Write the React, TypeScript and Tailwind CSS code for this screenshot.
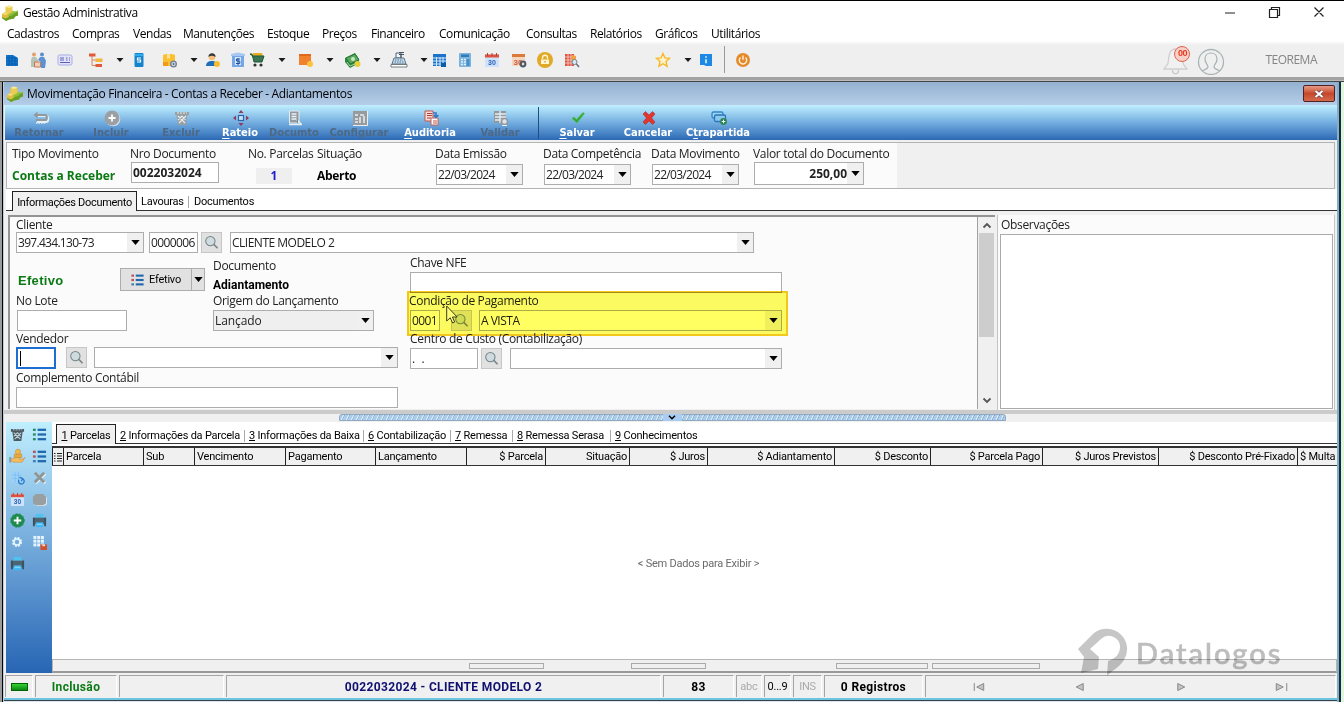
import React from "react";

type IconProps = { name: string; className?: string };

const Icon = ({ name, className = "w-4 h-4" }: IconProps) => (
  <svg viewBox="0 0 16 16" className={`shrink-0 overflow-visible ${className}`} fill="none">
    {glyphs[name]}
  </svg>
);

const listGlyph = (dots: string[], line: string) => (
  <>
    {[3, 8, 13].map((y, i) => (
      <g key={y}>
        <rect x="1" y={y - 1.2} width="3" height="2.4" fill={dots[i]} />
        <rect x="6" y={y - 1.2} width="9" height="2.4" fill={line} />
      </g>
    ))}
  </>
);

const calendar = (
  <>
    <rect x="1" y="2" width="14" height="13" rx="1" fill="#cfe2fb" />
    <path d="M1 5.500V2.500h14v3z" fill="#e0523f" />
    <path d="M3.500 1v3M8 1v3M12.500 1v3" stroke="#b9452f" />
    <text x="8" y="13" textAnchor="middle" fontSize="7" fontWeight="700" fontFamily="Liberation Sans, sans-serif" fill="#2a62b8">30</text>
  </>
);

const printer = (
  <>
    <path d="M4 1h8v4H4z" fill="#4fc3f0" />
    <path d="M1 5h14v7H1z" fill="#4d6573" />
    <path d="M1 5h2v9H1zM13 5h2v9h-2z" fill="#3d515e" />
    <path d="M4 10h8v5H4z" fill="#40b8f5" />
    <path d="M5 12h6" stroke="#9be1fb" />
  </>
);

const trash = (c: string, hi: string) => (
  <>
    <path d="M1 2h14v3h-1.500L12 15H4L2.500 5H1z" fill={c} />
    <path d="M4 6l7 7M8 6l3.500 4M12 6l-7 7M8 6l-4 4" stroke={hi} strokeWidth="1.100" />
    <path d="M3 3h10" stroke={hi} strokeDasharray="2 1" />
  </>
);

const glyphs: Record<string, React.ReactNode> = {
  caret: <path d="M4.500 6h7L8 10z" fill="#1a1a1a" />,
  app: (
    <>
      <path d="M0 9.500l4-2 3 1 3-3 3 1 3-1v5l-3 1-1 2-5 1-3 1.500-4-3z" fill="#8cc03a" />
      <path d="M0 11l4 2 4-2 3-1 2-2 3-1v3.500l-3 1-1 2-5 1-3 1.500-4-3z" fill="#6a9f27" />
      <path d="M3.500 2L6.500.500l4 1v5.500L7 9 3.500 7.500z" fill="#e9cc50" />
      <path d="M3.500 2L6.500.500l4 1L7.500 3z" fill="#f8ea9a" />
      <path d="M0 9l3-2 3.500 1.500V12l-3 1.500L0 12z" fill="#e0bd3c" />
      <path d="M0 9l3-2 3.500 1.500-3 1.500z" fill="#f4dd7a" />
    </>
  ),
  globe: (
    <>
      <path d="M2 3h7l5 3v8H2z" fill="#1376cf" />
      <path d="M2 6h11M2 9h12M2 12h12M5 3v11M8 3v11M11 5v9" stroke="#0959a4" strokeWidth=".8" />
    </>
  ),
  people: (
    <>
      <circle cx="4" cy="2.500" r="2" fill="#e0a071" />
      <circle cx="12" cy="2.500" r="2" fill="#5b8ed0" />
      <path d="M2 5h4l2 3v7H6v-4l-1 4H1V8z" fill="#b5c2b6" />
      <path d="M10 5h4l2 4-1 7h-4v-6L8 8z" fill="#5c92d4" />
      <path d="M4.500 10h6v5h-6z" fill="#f3cdb5" stroke="#bd724c" strokeWidth=".9" />
    </>
  ),
  card: (
    <>
      <rect x="1" y="3" width="14" height="10" rx="1.500" fill="#e3e4fb" stroke="#a9abe0" />
      <path d="M3 6h4M3 8h4M3 10.500h10M9 6h1.500M12 6h1M9 8h1.500M12 8h1" stroke="#5960b4" strokeWidth="1.200" />
    </>
  ),
  tree: (
    <>
      <path d="M4 4v9.500h4M4 8h4" stroke="#d78664" />
      <path d="M1 1.500h6.500v3H1zM7.500 12h6.500v3H7.500z" fill="#e05a37" />
      <path d="M7.500 6.500h7v3.500h-7z" fill="#f3b53a" />
    </>
  ),
  phone: (
    <>
      <rect x="3.500" y="1" width="9" height="14" rx="1" fill="#1484cf" />
      <path d="M4 2h8v2H4z" fill="#2dabf0" />
      <path d="M10 6H6.500v2h3v2H6" stroke="#fff" strokeWidth="1.200" />
    </>
  ),
  box: (
    <>
      <path d="M1 3l3-1h6l3 1v11H1z" fill="#fbc02d" />
      <path d="M5 2h3v5l-1.500-1L5 7z" fill="#fbe29a" />
      <path d="M1 10h5v4H1z" fill="#f29b1a" />
      <circle cx="11.500" cy="12" r="2.800" fill="#dce4ee" stroke="#72859b" strokeWidth="1.500" />
      <circle cx="11.500" cy="12" r="1" fill="#4b6789" />
    </>
  ),
  user: (
    <>
      <circle cx="7" cy="5" r="3.300" fill="#f6bf7a" />
      <path d="M3.500 5C3 0 11 0 10.500 5 8 4 6 3 3.500 5z" fill="#34343d" />
      <path d="M1 14c0-4 3-5 6-5s5 1 6 5z" fill="#1e6fb9" />
      <circle cx="12" cy="12" r="3" fill="#f8bf2d" />
    </>
  ),
  bag: (
    <>
      <path d="M2 4h12v11H2z" fill="#74a7e7" />
      <path d="M1 2l7-1.500L15 2v2H1z" fill="#a6c8f2" />
      <path d="M5 5h6v8H5z" fill="#d9e8fb" />
      <path d="M10 7H6.500v2h3.300v2.500H6M8 6v7" stroke="#1a4f9e" />
    </>
  ),
  cart: (
    <>
      <path d="M4 1h9l1 4H4z" fill="#e7ae24" />
      <path d="M1 2h2l2 8h8l2-6H4z" fill="#3a7653" stroke="#1f573c" />
      <circle cx="6" cy="13" r="1.600" fill="#333" />
      <circle cx="12" cy="13" r="1.600" fill="#333" />
    </>
  ),
  tile: (
    <>
      <path d="M1 2h12v11H1z" fill="#f0812d" />
      <path d="M1 2h12v2H1z" fill="#df6a1c" />
      <circle cx="12" cy="12" r="3" fill="#fbc23c" />
    </>
  ),
  money: (
    <>
      <path d="M0 6l10-5 4 6v4l-9 5-5-6z" fill="#2f8443" />
      <path d="M1 6l9-4 4 6-9 4z" fill="#59aa5e" stroke="#267739" />
      <circle cx="8" cy="7" r="2" fill="#c7e7c1" />
      <path d="M2 10l3 4 7-3" stroke="#a7d49c" />
      <circle cx="12.500" cy="12" r="3" fill="#e6cf3d" />
    </>
  ),
  register: (
    <>
      <path d="M5 1h5v5H5z" fill="#f1f6fb" stroke="#4f6478" />
      <path d="M3 6h10l2 6H1z" fill="#c5ddf1" stroke="#5b7287" />
      <path d="M4 8h8M3.500 10h9" stroke="#5b7287" strokeDasharray="1.500 1" />
      <path d="M0 12.500h16V15H0z" fill="#fff" stroke="#5b6266" strokeWidth=".8" />
      <path d="M8 .500h5M8 2.500h5M10 3v3" stroke="#4b545c" />
    </>
  ),
  gridcal: (
    <>
      <path d="M2 2h13v12H2z" fill="#1c73c9" />
      <path d="M2 6h13M2 9h13M2 12h13M5.500 5v9M9 5v9M12 5v9" stroke="#d2e8fa" />
      <path d="M10 11h5v4h-5z" fill="#0f5ca8" />
    </>
  ),
  calc: (
    <>
      <rect x="2" y="1" width="12" height="14" rx="1" fill="#7db3dc" />
      <path d="M4 2.500h8V5H4z" fill="#2d7dbb" />
      <path d="M4 7.500h5M4 10h5M4 12.500h5" stroke="#e2f1fb" strokeWidth="1.500" strokeDasharray="2 1" />
      <path d="M9.500 7h3v7h-3z" fill="#4290cb" />
    </>
  ),
  calendar,
  calset: (
    <>
      <path d="M1 2h13v12H1z" fill="#f4d6c1" />
      <path d="M1 2h13v3H1z" fill="#dc7b39" />
      <text x="7" y="13" textAnchor="middle" fontSize="8" fontWeight="700" fontFamily="Liberation Sans, sans-serif" fill="#d25b3d">30</text>
      <circle cx="12" cy="12" r="2.400" stroke="#4b5866" strokeWidth="2" />
    </>
  ),
  lock: (
    <>
      <circle cx="8" cy="8" r="8" fill="#e2a927" />
      <path d="M4 7.500h8V12H4z" fill="#fff5d2" />
      <path d="M5.500 7V5.500c0-3 5-3 5 0V7" stroke="#fff5d2" strokeWidth="1.300" />
      <path d="M8 9v1.500" stroke="#b97b0b" />
    </>
  ),
  report: (
    <>
      <path d="M1 2h9v12H1z" fill="#dc5546" />
      <path d="M1 5h9M1 8h9M1 11h9M4 2v12M7 2v12" stroke="#f9d4c4" strokeWidth=".8" />
      <path d="M8 3l4 1v6l-4 2z" fill="#f3a13c" />
      <circle cx="10.500" cy="10" r="2.500" fill="#d6e9f6" stroke="#75818c" />
      <path d="M12.500 12l2.500 3" stroke="#66707a" strokeWidth="1.500" />
    </>
  ),
  star: <path d="M8 1.500l1.900 4.400 4.600.4-3.500 3.200 1.100 4.700L8 11.700l-4.100 2.500L5 9.500 1.500 6.300l4.600-.4z" stroke="#f7b92a" strokeWidth="1.400" fill="#fff2cb" />,
  info: (
    <>
      <path d="M2 2h12v12H8l-2-1H2z" fill="#1e88e5" />
      <path d="M8 4.200v1.600M8 7.200v4" stroke="#d8eefd" strokeWidth="1.700" />
    </>
  ),
  power: (
    <>
      <circle cx="8" cy="8" r="7" fill="#e58a2b" />
      <path d="M5.500 5.500a3.700 3.700 0 1 0 5 0M8 3.500v4.200" stroke="#fff1da" strokeWidth="1.400" />
    </>
  ),
  back: (
    <>
      <path d="M6 6h8c3 0 3 6 0 6H5" stroke="#e6eff3" strokeWidth="2" />
      <path d="M5 5h8c2.500 0 2.500 5 0 5H4" stroke="#92989c" strokeWidth="2" />
      <path d="M1.500 5l4-3.500v7z" fill="#92989c" />
      <path d="M4 13h9" stroke="#e3edf2" strokeWidth="1.500" strokeDasharray="1.500 1" />
    </>
  ),
  plusgray: (
    <>
      <circle cx="9" cy="9" r="7.300" fill="#dce5ea" />
      <circle cx="8" cy="8" r="7.500" fill="#9aa0a4" />
      <path d="M8 4.500v7M4.500 8h7" stroke="#fff" strokeWidth="1.800" />
    </>
  ),
  trashgray: trash("#98a0a4", "#e8f0f4"),
  trash: trash("#4c5960", "#bcd3dc"),
  move: (
    <>
      <rect x="5.500" y="5.500" width="5" height="5" stroke="#2f64a8" strokeWidth="1.200" fill="#c9e4fa" />
      <path d="M8 0l2.500 3h-5zM8 16l2.500-3h-5zM0 8l3-2.500v5zM16 8l-3-2.500v5z" fill="#8f3a5c" />
    </>
  ),
  docgray: (
    <>
      <path d="M2.500 1h9.500v12H2.500z" fill="#929a9f" stroke="#e3edf2" />
      <path d="M4.500 4h5M4.500 6.500h5M4.500 9h5" stroke="#edf4f7" strokeWidth="1.300" />
      <path d="M10 10l4 4M2 14.500h13" stroke="#e7eef2" strokeWidth="1.700" />
      <path d="M10.500 9v4" stroke="#81898e" />
    </>
  ),
  config: (
    <>
      <path d="M1 1h14v14H1z" fill="#979b9e" />
      <path d="M15.500 1v14.500H1" stroke="#e9f0f4" />
      <path d="M3 5h3M3 9h3M8 13V7M12 13V6M8 5h4M3 12h3" stroke="#e9f0f4" strokeWidth="1.500" />
    </>
  ),
  audit: (
    <>
      <path d="M2 1h8v10H2z" fill="#f2dfdc" stroke="#c55345" />
      <path d="M4 3.500h5M4 5.500h5M4 8h4" stroke="#b63b33" />
      <path d="M8 8h7v7H8z" fill="#fff" stroke="#c06558" />
      <path d="M10 3h3v4m-2-2l2 2.500L15.500 5" stroke="#2e78c7" strokeWidth="1.500" />
      <path d="M10 11h4M10 13h4" stroke="#c55345" />
    </>
  ),
  validate: (
    <>
      <path d="M1 1h12v12H1z" fill="#8f999e" />
      <path d="M2 4h11M2 7h11M2 10h11M7 1v12" stroke="#e5edf1" strokeWidth="1.300" />
      <circle cx="11.500" cy="11.500" r="3" fill="#dce5ea" stroke="#93999c" strokeWidth="1.500" />
      <path d="M9 15.500h5" stroke="#eef4f6" />
    </>
  ),
  check: <path d="M2 8.500l2-1.500 2.500 2.500L13 2.500l1.500 1L7 13z" fill="#2fa83a" stroke="#55c34d" strokeWidth=".6" />,
  cross: <path d="M2 4l2.500-2.500L8 5l3.500-3.500L14 4l-3.500 4 3.500 4-2.500 2.500L8 11l-3.500 3.500L2 12l3.500-4z" fill="#e2352e" stroke="#a91f24" strokeWidth=".5" />,
  cards: (
    <>
      <rect x="1" y="2" width="11" height="6" rx="1.500" stroke="#3286c9" strokeWidth="1.300" fill="#9dd2f1" />
      <rect x="3.500" y="5" width="11" height="6.500" rx="1.500" stroke="#2575b8" strokeWidth="1.300" fill="#8cc8ee" />
      <circle cx="12.500" cy="11.500" r="3.400" fill="#298553" />
      <path d="M12.500 9.700v3.600M10.700 11.500h3.600" stroke="#fff" />
    </>
  ),
  search: (
    <>
      <circle cx="6.800" cy="6.500" r="5" stroke="#76868c" strokeWidth="1.100" fill="#cfdbde" />
      <path d="M10.500 10l4 4.200" stroke="#7b8588" strokeWidth="1.700" />
    </>
  ),
  listGreen: listGlyph(["#2a8b62", "#2a8b62", "#2a8b62"], "#1f68ad"),
  listRed: listGlyph(["#b84e5b", "#b84e5b", "#3b7db8"], "#1f68ad"),
  hand: (
    <>
      <path d="M1 10h3l3-1h4l-1 2h3l3-2-3 5H4l-3-1z" fill="#f5bd60" stroke="#c98936" strokeWidth=".6" />
      <path d="M4.500 5.500h8V9h-8z" fill="#e9aa3e" stroke="#c17f25" strokeWidth=".5" />
      <circle cx="8.500" cy="3" r="2.800" fill="#efb64c" stroke="#c17f25" strokeWidth=".5" />
      <path d="M0 8.500v6" stroke="#4f779a" />
    </>
  ),
  gridrefresh: (
    <>
      <path d="M2 2h10v11H2z" fill="#9fd2fa" />
      <path d="M2 5.500h10M2 9h10M5.500 2v11M9 2v11" stroke="#7fbff2" />
      <path d="M9.500 10.500a3 3 0 1 0 4-1.200M10 7.500l3.500 1.700L12 12" stroke="#2779cc" strokeWidth="1.400" />
    </>
  ),
  crossgray: (
    <>
      <path d="M4 4l10 10M14 4L4 14" stroke="#eef3f5" strokeWidth="3" />
      <path d="M3 3l10 10M13 3L3 13" stroke="#8f9698" strokeWidth="3.200" />
    </>
  ),
  printgray: (
    <>
      <path d="M5 3h8l3 3v7l-3 2H5l-3-2V6z" fill="#dfe6ea" />
      <path d="M4 2h8l3 3v7l-3 2H4l-3-2V5z" fill="#999fa1" />
    </>
  ),
  plusgreen: (
    <>
      <circle cx="8" cy="8" r="7.300" fill="#1e8b4e" />
      <circle cx="8" cy="8" r="7.300" stroke="#2a8f59" strokeDasharray="2 2" />
      <path d="M8 4v8M4 8h8" stroke="#fff" strokeWidth="2" />
    </>
  ),
  printer,
  gear: (
    <>
      <circle cx="8" cy="8" r="5.200" stroke="#e8f7ff" strokeWidth="3" strokeDasharray="2.500 1.600" />
      <circle cx="8" cy="8" r="4" stroke="#e4f4fd" strokeWidth="2.200" />
    </>
  ),
  gridsave: (
    <>
      {[1, 5, 9].map((y) => [1, 5, 9].map((x) => <rect key={`${x}-${y}`} x={x + 0.5} y={y} width="3.200" height="3.200" fill="#e5f4ff" />))}
      <path d="M9 10h7v6H9z" fill="#d2502e" />
      <path d="M11 10h3v2h-3z" fill="#f8d9ce" />
    </>
  ),
};

const SEGOE = "font-['Open_Sans',sans-serif] text-[12px] leading-4 whitespace-nowrap";
const LABEL = `${SEGOE} tracking-[-0.32px]`;
const SANS = "font-['Roboto',sans-serif] text-[11px] leading-4 whitespace-nowrap tracking-[-0.22px]";
const STATUS = "font-['Roboto',sans-serif] text-[12px] font-bold leading-4 whitespace-nowrap tracking-[0.35px]";
const BOLD = "font-['Open_Sans',sans-serif] font-bold text-[12px] leading-4 whitespace-nowrap";

const menus: [string, string][] = [
  ["Cadastros", "w-[65px]"], ["Compras", "w-[61px]"], ["Vendas", "w-[50px]"], ["Manutenções", "w-[84px]"],
  ["Estoque", "w-[55px]"], ["Preços", "w-[49px]"], ["Financeiro", "w-[68px]"], ["Comunicação", "w-[87px]"],
  ["Consultas", "w-[64px]"], ["Relatórios", "w-[65px]"], ["Gráficos", "w-[56px]"], ["Utilitários", "w-[60px]"],
];

const tools: [string, string][] = [
  ["globe", "w-[26px]"], ["people", "w-[27px]"], ["card", "w-[31px]"], ["tree", "w-[24px]"], ["caret", "w-[19px]"],
  ["phone", "w-[31px]"], ["box", "w-[24px]"], ["caret", "w-[19px]"], ["user", "w-[25px]"], ["bag", "w-[19px]"],
  ["cart", "w-[25px]"], ["caret", "w-[24px]"], ["tile", "w-[24px]"], ["caret", "w-[23px]"], ["money", "w-[24px]"],
  ["caret", "w-[22px]"], ["register", "w-[25px]"], ["caret", "w-[15px]"], ["gridcal", "w-[26px]"], ["calc", "w-[27px]"],
  ["calendar", "w-[27px]"], ["calset", "w-[26px]"], ["lock", "w-[27px]"], ["report", "w-[91px]"], ["star", "w-[25px]"],
  ["caret", "w-[18px]"], ["info", "w-[26px]"],
];

type Action = { label: string; hot: number; icon: string; width: string; off?: boolean };
const actionsLeft: Action[] = [
  { label: "Retornar", hot: -1, icon: "back", width: "w-[68px]", off: true },
  { label: "Incluir", hot: 0, icon: "plusgray", width: "w-[76px]", off: true },
  { label: "Excluir", hot: 0, icon: "trashgray", width: "w-[64px]", off: true },
  { label: "Rateio", hot: 0, icon: "move", width: "w-[54px]" },
  { label: "Documto", hot: 0, icon: "docgray", width: "w-[54px]", off: true },
  { label: "Configurar", hot: 0, icon: "config", width: "w-[76px]", off: true },
  { label: "Auditoria", hot: 0, icon: "audit", width: "w-[66px]" },
  { label: "Validar", hot: 0, icon: "validate", width: "w-[74px]", off: true },
];
const actionsRight: Action[] = [
  { label: "Salvar", hot: 0, icon: "check", width: "w-[76px]" },
  { label: "Cancelar", hot: -1, icon: "cross", width: "w-[66px]" },
  { label: "Ctrapartida", hot: 1, icon: "cards", width: "w-[74px]" },
];

const ActionButton = ({ label, hot, icon, width, off }: Action) => (
  <div className={`flex shrink-0 flex-col items-center pt-[5px] ${width}`}>
    <Icon name={icon} className="ml-[2px] h-4 w-4" />
    <span className={`font-['DejaVu_Sans_Condensed','DejaVu_Sans',sans-serif] text-[11px] leading-[14px] font-bold whitespace-nowrap ${off ? "text-[#4d6985]" : "text-white"}`}>
      {hot < 0 ? label : (<>{label.slice(0, hot)}<u className="underline-offset-2">{label[hot]}</u>{label.slice(hot + 1)}</>)}
    </span>
  </div>
);

const Arrow = ({ box = "w-4 bg-[#f0f0f0]" }: { box?: string }) => (
  <span className={`flex h-full shrink-0 items-center justify-center ${box}`}>
    <svg viewBox="0 0 10 6" className="h-[5px] w-[9px]"><path d="M0 0h10L5 6z" fill="#000" /></svg>
  </span>
);

const Field = ({ className, children, arrow, text = "tracking-[-0.3px]" }: { className: string; children?: React.ReactNode; arrow?: boolean; text?: string }) => (
  <div className={`flex shrink-0 items-center border border-[#adadad] ${className}`}>
    <span className={`min-w-0 flex-1 pl-px ${SEGOE} text-[#222] ${text}`}>{children}</span>
    {arrow && <Arrow />}
  </div>
);

const SearchBtn = ({ className = "" }: { className?: string }) => (
  <div className={`flex h-[21px] w-[21px] shrink-0 items-center justify-center border border-[#c6c6c6] bg-[#e1e1e1] ${className}`}>
    <Icon name="search" className="h-[15px] w-[15px]" />
  </div>
);

const sideIcons = ["trash", "listGreen", "hand", "listRed", "gridrefresh", "crossgray", "calendar", "printgray", "plusgreen", "printer", "gear", "gridsave", "printer"];

const bottomTabs: [string, string, string][] = [
  ["2", " Informações da Parcela", "w-[129px]"], ["3", " Informações da Baixa", "w-[119px]"], ["6", " Contabilização", "w-[87px]"],
  ["7", " Remessa", "w-[62px]"], ["8", " Remessa Serasa", "w-[98px]"], ["9", " Conhecimentos", "w-[90px]"],
];

const columns: [string, string][] = [
  ["Parcela", "w-[80px]"], ["Sub", "w-[51px]"], ["Vencimento", "w-[91px]"], ["Pagamento", "w-[90px]"], ["Lançamento", "w-[91px]"],
  ["$ Parcela", "w-[79px] text-right"], ["Situação", "w-[84px] text-right"], ["$ Juros", "w-[78px] text-right"],
  ["$ Adiantamento", "w-[127px] text-right"], ["$ Desconto", "w-[96px] text-right"], ["$ Parcela Pago", "w-[112px] text-right"],
  ["$ Juros Previstos", "w-[116px] text-right"], ["$ Desconto Pré-Fixado", "w-[139px] text-right"], ["$ Multa", "w-[39px]"],
];

const Status = ({ className, children }: { className: string; children?: React.ReactNode }) => (
  <div className={`mr-[2px] flex h-[22px] shrink-0 items-center justify-center border-t border-l border-[#a5a5a5] border-r border-r-white ${className}`}>{children}</div>
);

export default function App() {
  return (
    <div className="relative flex h-[702px] w-[1344px] flex-col overflow-hidden border-t border-black bg-white text-[#222]">
      <div className="flex h-[24px] shrink-0 items-center pl-[2px]">
        <Icon name="app" />
        <span className={`ml-[5px] text-black ${SEGOE} tracking-[-0.42px]`}>Gestão Administrativa</span>
        <svg viewBox="0 0 108 16" className="mr-[14px] mb-[3px] ml-auto h-4 w-[108px]" fill="none" stroke="#222" strokeWidth="1.200">
          <path d="M3 9h10M47.500 5.500h8v8h-8zM49.500 5.500v-2h8v8h-2M92.500 3.500l9 9M101.500 3.500l-9 9" />
        </svg>
      </div>
      <nav className="flex h-[17px] shrink-0 items-center pl-[7px]">
        {menus.map(([m, w]) => <span key={m} className={`shrink-0 text-black ${SEGOE} tracking-[-0.45px] ${w}`}>{m}</span>)}
      </nav>
      <div className="flex h-[35px] shrink-0 items-center border-t-2 border-[#f6f6f6] bg-[#efefef] pb-[2px] pl-1">
        {tools.map(([n, w], i) => <span key={i} className={`flex shrink-0 ${w}`}><Icon name={n} /></span>)}
        <span className="mr-[10px] h-[27px] w-px bg-[#999]" />
        <Icon name="power" />
        <div className="relative ml-auto flex items-center pr-[27px]">
          <svg viewBox="0 0 62 30" className="mr-[40px] h-[30px] w-[62px]" fill="none">
            <path d="M13 4c-8 0-7 9-8 14-1 3-3 4-4 6h23c-1-2-3-3-4-6-1-5 0-14-7-14z" fill="#f1f1f1" stroke="#cfcfcf" strokeWidth="1.300" />
            <path d="M9.500 25c0 5 6 5 6 0" stroke="#c7c7c7" strokeWidth="1.300" />
            <circle cx="48" cy="17" r="12.500" stroke="#aab5b5" strokeWidth="1.300" />
            <path d="M39 26c3-2 5-1 6-4 0-3-3-3-3-8 0-8 12-8 12 0 0 5-3 5-3 8 1 3 3 2 6 4" stroke="#a5b2b1" strokeWidth="1.200" />
          </svg>
          <span className="absolute top-[1px] left-[11px] flex h-[16px] w-[16px] items-center justify-center rounded-full border-[1.5px] border-[#e2614f] bg-[#f7d0c7] font-['Liberation_Sans',sans-serif] text-[9px] leading-none font-bold tracking-[-0.5px] text-[#e43b22]">00</span>
          <span className="font-['Open_Sans',sans-serif] text-[12px] tracking-[-0.5px] text-[#858585]">TEOREMA</span>
        </div>
      </div>
      <div className="h-[5px] shrink-0 border-t-[3px] border-b border-t-[#a3a3a3] border-b-[#444] bg-[#bbb]" />

      <div className="flex min-h-0 flex-1">
        <div className="w-[3px] shrink-0 border-r border-black bg-[#9c9c9c]" />
        <div className="flex w-[1336px] shrink-0 flex-col border-r-2 border-l border-r-[#86aec6] border-l-[#b8d0e0] bg-[#f0f0f0]">
          <div className="flex h-[23px] shrink-0 items-center bg-linear-to-b from-[#94b1d1] to-[#b5cde8] pr-[2px] pl-[3px]">
            <Icon name="app" />
            <span className={`ml-[4px] text-black ${SEGOE} tracking-[-0.37px]`}>Movimentação Financeira - Contas a Receber - Adiantamentos</span>
            <div className="ml-auto flex h-[17px] w-[32px] items-center justify-center rounded-[2px] border border-[#4f2024] bg-linear-to-b from-[#e69a86] via-[#c6472a] via-50% to-[#d36a4c]">
              <svg viewBox="0 0 10 8" className="h-2 w-[10px]"><path d="M1.500 1l7 6M8.500 1l-7 6" stroke="#5b3e48" strokeWidth="3.200" /><path d="M1.500 1l7 6M8.500 1l-7 6" stroke="#fff" strokeWidth="2" /></svg>
            </div>
          </div>

          <div className="ml-[1px] flex h-[35px] shrink-0 bg-linear-to-b from-[#c0effe] via-[#74aee0] via-50% to-[#2c69b5]">
            {actionsLeft.map((a) => <ActionButton key={a.label} {...a} />)}
            <span className="mx-[0.5px] mt-[2px] h-[32px] w-px bg-[#1f4d80]" />
            {actionsRight.map((a) => <ActionButton key={a.label} {...a} />)}
          </div>

          <div className="mx-[2px] mt-[2px] flex h-[47px] shrink-0 border border-[#b4b4b4]">
            <div className="flex w-[890px] bg-[#fbfbfb] pl-[5px]">
              <div className="flex w-[118px] flex-col pt-[3px]">
                <span className={LABEL}>Tipo Movimento</span>
                <span className={`mt-[6px] text-[#0b7a14] ${BOLD}`}>Contas a Receber</span>
              </div>
              <div className="flex w-[118px] flex-col pt-[3px]">
                <span className={LABEL}>Nro Documento</span>
                <Field className="ml-px h-[21px] w-[88px] bg-white" text="font-bold">0022032024</Field>
              </div>
              <div className="flex w-[69px] flex-col pt-[3px]">
                <span className={LABEL}>No. Parcelas</span>
                <span className={`mt-[6px] ml-[8px] w-[36px] bg-[#efefef] text-center text-[#1d1dcc] ${BOLD}`}>1</span>
              </div>
              <div className="flex w-[118px] flex-col pt-[3px]">
                <span className={LABEL}>Situação</span>
                <span className={`mt-[6px] text-black ${BOLD} tracking-[-0.3px]`}>Aberto</span>
              </div>
              {["Data Emissão", "Data Competência", "Data Movimento"].map((d, i) => (
                <div key={d} className={`flex flex-col pt-[3px] ${i === 2 ? "w-[102px]" : "w-[108px]"}`}>
                  <span className={LABEL}>{d}</span>
                  <Field className="mt-[2px] ml-px h-[21px] w-[87px] bg-white" arrow text="tracking-[-0.7px]">22/03/2024</Field>
                </div>
              ))}
              <div className="flex flex-col pt-[3px]">
                <span className={LABEL}>Valor total do Documento</span>
                <Field className="ml-px h-[23px] w-[110px] bg-white" arrow text="text-right font-bold">250,00</Field>
              </div>
            </div>
          </div>

          <div className="ml-[2px] flex h-[22px] shrink-0 items-end border-b border-[#333] bg-white">
            <div className={`ml-[6px] -mb-px flex h-[20px] w-[125px] items-center justify-center border border-b-0 border-[#222] bg-[#f0f0f0] pt-[2px] text-black ${SANS} tracking-[-0.32px]`}>Informações Documento</div>
            <span className={`w-[52px] bg-[linear-gradient(#aaa,#aaa)] bg-[length:1px_12px] bg-right bg-no-repeat pl-[4px] text-black ${SANS}`}>Lavouras</span>
            <span className={`pl-[5px] text-black ${SANS}`}>Documentos</span>
          </div>

          <div className="ml-[2px] flex h-[199px] shrink-0 bg-[#f0f0f0] pt-[4px]">
            <div className="relative ml-[2px] flex h-[194px] w-[987px] shrink-0 border-t-2 border-l-2 border-[#939393] bg-[#fbfbfb]">
              <div className="flex w-[967px] flex-col pl-[6px]">
                <span className={`h-[15px] ${LABEL}`}>Cliente</span>
                <div className="flex h-[21px]">
                  <Field className="w-[128px] bg-white" arrow text="tracking-[-0.7px]">397.434.130-73</Field>
                  <Field className="ml-[5px] w-[49px] bg-white" text="tracking-[-0.6px]">0000006</Field>
                  <SearchBtn className="ml-[3px]" />
                  <Field className="ml-[8px] w-[524px] bg-white" arrow text="tracking-[-0.5px]">CLIENTE MODELO 2</Field>
                </div>
                <div className="flex">
                  <div className="flex w-[394px] flex-col">
                    <div className="flex h-[40px]">
                      <span className="ml-[2px] w-[102px] pt-[20px] font-['Liberation_Sans',sans-serif] text-[13px] leading-4 font-bold tracking-[0.3px] text-[#0b7a14]">Efetivo</span>
                      <div className="mt-[15px] flex h-[23px] w-[85px] items-center border border-[#adadad] bg-[#e1e1e1]">
                        <Icon name="listRed" className="ml-[9px] h-[14px] w-[15px]" />
                        <span className={`ml-[4px] flex-1 text-black ${SANS}`}>Efetivo</span>
                        <Arrow box="w-[13px] border-l border-[#adadad]" />
                      </div>
                      <div className="ml-[8px] flex flex-col pt-[5px]">
                        <span className={LABEL}>Documento</span>
                        <span className="mt-[3px] font-['Roboto',sans-serif] text-[12px] leading-4 font-bold whitespace-nowrap text-black">Adiantamento</span>
                      </div>
                    </div>
                    <div className="flex h-[38px]">
                      <div className="flex w-[197px] flex-col">
                        <span className={`h-[17px] ${LABEL}`}>No Lote</span>
                        <Field className="ml-px h-[21px] w-[110px] bg-white" />
                      </div>
                      <div className="flex flex-col">
                        <span className={`h-[17px] ${LABEL}`}>Origem do Lançamento</span>
                        <Field className="h-[21px] w-[161px] bg-[#efefef]" arrow text="pl-[3px] tracking-[-0.1px]">Lançado</Field>
                      </div>
                    </div>
                    <span className={`h-[16px] ${LABEL}`}>Vendedor</span>
                    <div className="flex h-[22px]">
                      <div className="flex h-[22px] w-[40px] items-center border-2 border-[#1c6fd0] bg-white pl-[2px]"><span className="h-[15px] w-px bg-black" /></div>
                      <SearchBtn className="ml-[10px]" />
                      <Field className="ml-[7px] h-[21px] w-[304px] bg-white" arrow />
                    </div>
                    <span className={`mt-px h-[17px] ${LABEL}`}>Complemento Contábil</span>
                    <Field className="h-[21px] w-[382px] bg-white" />
                  </div>
                  <div className="flex w-[374px] flex-col">
                    <span className={`mt-[2px] h-[17px] ${LABEL}`}>Chave NFE</span>
                    <Field className="h-[21px] w-[372px] bg-white" />
                    <span className={`h-[17px] ${LABEL} -ml-px`}>Condição de Pagamento</span>
                    <div className="flex h-[21px]">
                      <Field className="w-[30px] bg-white" text="tracking-[-0.6px]">0001</Field>
                      <SearchBtn className="ml-[11px]" />
                      <Field className="ml-[7px] w-[303px] bg-white" arrow text="tracking-[-0.5px]">A VISTA</Field>
                    </div>
                    <span className={`h-[17px] ${LABEL}`}>Centro de Custo (Contabilização)</span>
                    <div className="flex h-[21px]">
                      <Field className="w-[68px] bg-white" text="pl-[9px] whitespace-pre">{".  ."}</Field>
                      <SearchBtn className="ml-[3px]" />
                      <Field className="ml-[8px] w-[272px] bg-white" arrow />
                    </div>
                  </div>
                </div>
              </div>
              <div className="flex w-[18px] flex-col items-center border-l border-[#a0a0a0] bg-[#f0f0f0]">
                <svg viewBox="0 0 16 16" className="h-4 w-4" fill="none"><path d="M4.500 10.500L8 7l3.500 3.500" stroke="#555" strokeWidth="1.800" /></svg>
                <div className="h-[104px] w-[15px] bg-[#cdcdcd]" />
                <svg viewBox="0 0 16 16" className="mt-auto h-4 w-4" fill="none"><path d="M4.500 5.500L8 9l3.500-3.500" stroke="#555" strokeWidth="1.800" /></svg>
              </div>
              <div className="absolute top-[74px] left-[397px] h-[45px] w-[381px] border-2 border-[#f7cb1c] bg-[#ffff62] mix-blend-multiply" />
              <svg viewBox="0 0 12 19" className="absolute top-[88px] left-[436px] h-[19px] w-[12px]"><path d="M.7 1v15l3.500-3.200L6.700 18l2-1-2.300-5h4.700z" fill="#ffff7a" stroke="#3c3c20" /></svg>
            </div>
            <div className="ml-[2px] flex w-[338px] shrink-0 flex-col border-r border-l border-[#c4c4c4] bg-[#fbfbfb] pl-[2px]">
              <span className={`h-[19px] pt-[2px] pl-px ${LABEL}`}>Observações</span>
              <div className="h-[175px] w-[333px] border border-[#aaa] bg-white" />
            </div>
          </div>

          <div className="flex h-[12px] shrink-0 justify-center border-t-[4px] border-[#cbcbcb] bg-[#f0f0f0]">
            <div className="ml-[3px] flex h-[7px] w-[667px] items-center justify-center rounded-t-[3px] border border-[#8faac2] bg-[#a9cdef] bg-[repeating-linear-gradient(115deg,#a9cdef_0px,#a9cdef_2.5px,#eef6fd_3.2px,#7f9fba_4.530px)]">
              <span className="flex h-[7px] w-[19px] items-center justify-center bg-[#a9cdf2]"><svg viewBox="0 0 8 5" className="h-[5px] w-2" fill="none"><path d="M1 .800l3 3 3-3" stroke="#000" strokeWidth="1.500" /></svg></span>
            </div>
          </div>

          <div className="flex h-[251px] shrink-0">
            <div className="ml-[2px] grid w-[46px] shrink-0 auto-rows-[21.500px] grid-cols-[22px_22px] content-start bg-linear-to-b from-[#c0effe] to-[#2765b4] pt-[2px]">
              {sideIcons.map((n, i) => <span key={i} className="flex items-center justify-center"><Icon name={n} className={n === "gear" ? "h-3 w-3" : "h-[15px] w-[15px]"} /></span>)}
            </div>
            <div className="flex min-w-0 flex-1 flex-col bg-white">
              <div className="flex h-[22px] shrink-0 items-end border-b border-[#333]">
                <div className={`-mb-px ml-[4px] flex h-[20px] w-[60px] items-center justify-center border border-b-0 border-[#222] bg-[#f0f0f0] pt-[2px] text-black ${SANS}`}><span><u>1</u> Parcelas</span></div>
                {bottomTabs.map(([n, t, w], i) => (
                  <span key={n} className={`-mb-px shrink-0 pl-[4px] text-black ${SANS} ${w} ${i < 5 ? "bg-[linear-gradient(#aaa,#aaa)] bg-[length:1px_12px] bg-right bg-no-repeat" : ""}`}><u>{n}</u>{t}</span>
                ))}
              </div>
              <div className="mt-[2px] flex h-[20px] shrink-0 overflow-hidden border-t-2 border-b border-[#333] bg-[#f0f0f0]">
                <div className="flex w-[12px] shrink-0 items-center justify-center border-x border-[#222]">
                  <svg viewBox="0 0 8 10" className="h-[10px] w-2" stroke="#222"><path d="M0 1.500h1.500M3 1.500h5M0 4h1.500M3 4h5M0 6.500h1.500M3 6.500h5M0 9h1.500M3 9h5" /></svg>
                </div>
                {columns.map(([c, w], i) => <div key={c} className={`shrink-0 px-[2px] pt-px text-black ${SANS} ${w} ${i < 13 ? "border-r border-[#222]" : ""}`}>{c}</div>)}
              </div>
              <div className={`flex flex-1 items-center justify-center pt-[3px] pl-[8px] text-[#6b6b6b] ${SANS}`}>&lt; Sem Dados para Exibir &gt;</div>
              <div className="flex h-[14px] shrink-0 items-center border-t border-r border-b-2 border-l border-[#b5b5b5] border-b-[#999] bg-[#f0f0f0]">
                <span className="ml-[416px] h-[6px] w-[75px] border border-[#aaa]" />
                <span className="ml-[87px] h-[6px] w-[75px] border border-[#aaa]" />
                <span className="ml-[130px] h-[6px] w-[92px] border border-[#aaa]" />
                <span className="ml-[4px] h-[6px] w-[108px] border border-[#aaa]" />
              </div>
            </div>
          </div>

          <div className="mt-[2px] flex h-[23px] shrink-0 overflow-hidden pl-[1px] text-black">
            <Status className="w-[28px]"><span className="h-[8px] w-[17px] border border-[#006400] bg-linear-to-b from-[#35cf35] to-[#068a10]" /></Status>
            <Status className="w-[82px]"><span className={`text-[#0b7a14] ${STATUS}`}>Inclusão</span></Status>
            <Status className="w-[105px]" />
            <Status className="w-[435px]"><span className={`text-[#101070] ${STATUS}`}>0022032024 - CLIENTE MODELO 2</span></Status>
            <Status className="w-[71px]"><span className={STATUS}>83</span></Status>
            <Status className="w-[26px]"><span className={`text-[#aaa] ${SANS}`}>abc</span></Status>
            <Status className="w-[27px]"><span className={SANS}>0...9</span></Status>
            <Status className="w-[29px]"><span className={`text-[#aaa] ${SANS}`}>INS</span></Status>
            <Status className="w-[99px]"><span className={STATUS}>0 Registros</span></Status>
            <Status className="w-[411px]">
              <svg viewBox="0 0 411 22" className="h-[22px] w-[411px]" fill="#c4c4c4" stroke="#888">
                <path d="M48.500 7v8M58 7.500v7l-7-3.500zM158 7.500v7l-7-3.500zM253 7.500v7l7-3.500zM352 7.500v7l7-3.500zM362.500 7v8" />
              </svg>
            </Status>
          </div>
          <div className="h-[3px] shrink-0 border-b border-[#33424c] bg-[#6cc4e0]" />
          <div className="flex-1 bg-[#dce7ec]" />
        </div>
        <div className="w-[2px] shrink-0 bg-[#142c3c]" />
        <div className="flex-1 bg-[#dff5df]" />
      </div>

      <div className="absolute top-[625px] left-[1077px] flex items-center mix-blend-multiply">
        <svg viewBox="1077 626 52 51" className="h-[51px] w-[52px]"><path d="M1078 649L1094 633A20.500 20.500 0 0 1 1124 660C1119 668 1111 671 1107 676L1108 661C1115 659 1120 654 1120 647A11.200 11.200 0 0 0 1101 639L1090 649L1099 657L1098 669L1081 673L1084 657Z" fill="#c6c6c6" /></svg>
        <span className="mt-[3px] ml-[7px] font-['Lato',sans-serif] text-[29px] leading-[34px] font-medium tracking-[2px] text-[#bdbdbd] [-webkit-text-stroke:0.6px_#bdbdbd]">Datalogos</span>
      </div>
    </div>
  );
}
